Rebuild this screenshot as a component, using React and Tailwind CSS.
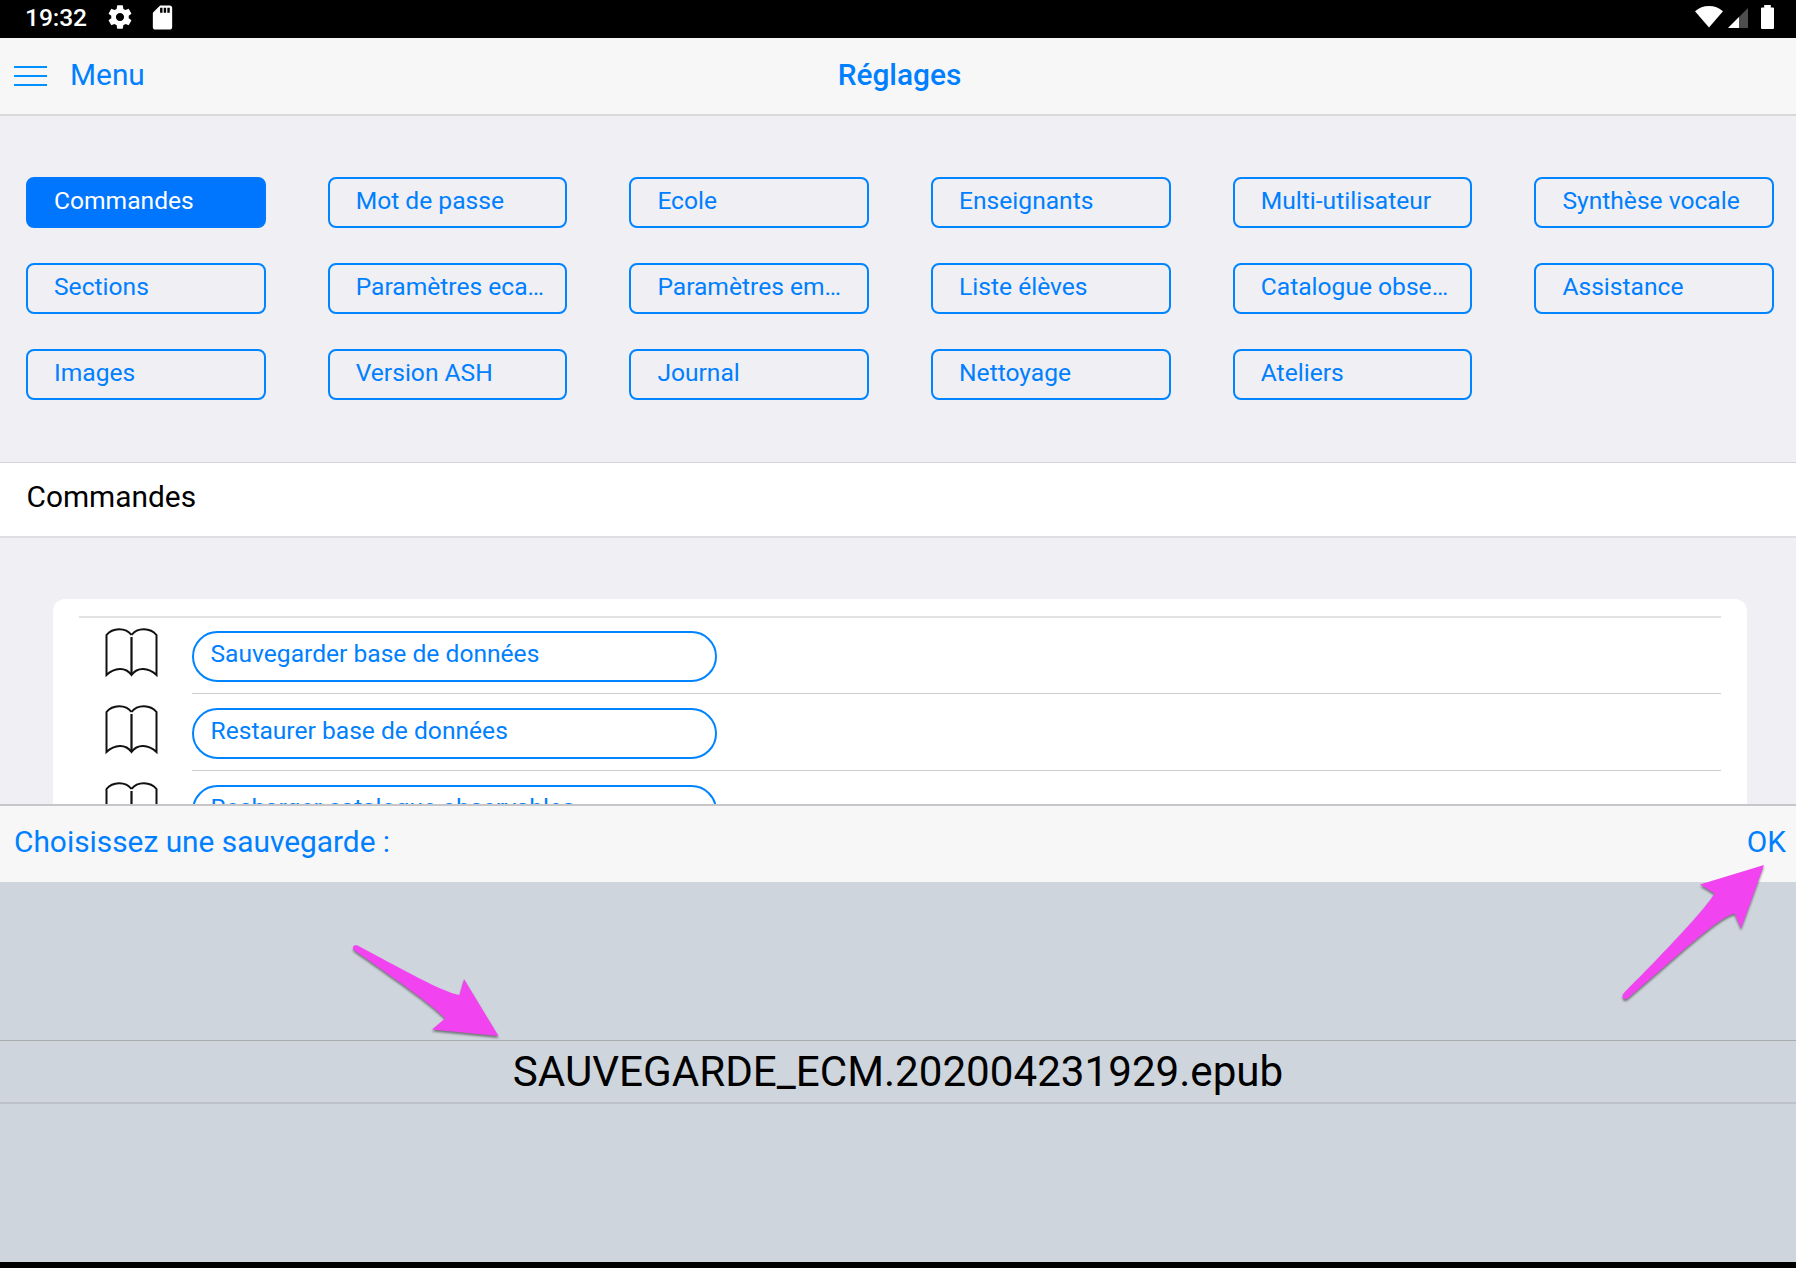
import React from "react";

const TABS = [
  "Commandes", "Mot de passe", "Ecole", "Enseignants", "Multi-utilisateur", "Synthèse vocale",
  "Sections", "Paramètres eca…", "Paramètres em…", "Liste élèves", "Catalogue obse…", "Assistance",
  "Images", "Version ASH", "Journal", "Nettoyage", "Ateliers",
];

const COMMANDS = [
  "Sauvegarder base de données",
  "Restaurer base de données",
  "Recharger catalogue observables",
];

function StatusBar() {
  return (
    <div className="flex h-[38px] shrink-0 items-start bg-black text-white">
      <span className="ml-[25px] mt-[3px] w-[64px] text-[24.6px] font-medium leading-[30px] tracking-[-0.1px]">19:32</span>
      <svg className="ml-[17px] mt-[3px] h-[28px] w-[28px]" viewBox="0 0 24 24" fill="currentColor">
        <path d="M19.43 12.98c.04-.32.07-.64.07-.98s-.03-.66-.07-.98l2.11-1.65c.19-.15.24-.42.12-.64l-2-3.46c-.12-.22-.39-.3-.61-.22l-2.49 1c-.52-.4-1.08-.73-1.69-.98l-.38-2.65C14.46 2.18 14.25 2 14 2h-4c-.25 0-.46.18-.49.42l-.38 2.65c-.61.25-1.17.59-1.69.98l-2.49-1c-.23-.09-.49 0-.61.22l-2 3.46c-.13.22-.07.49.12.64l2.11 1.65c-.04.32-.07.65-.07.98s.03.66.07.98l-2.11 1.65c-.19.15-.24.42-.12.64l2 3.46c.12.22.39.3.61.22l2.49-1c.52.4 1.08.73 1.69.98l.38 2.65c.03.24.24.42.49.42h4c.25 0 .46-.18.49-.42l.38-2.65c.61-.25 1.17-.59 1.69-.98l2.49 1c.23.09.49 0 .61-.22l2-3.46c.12-.22.07-.49-.12-.64l-2.11-1.65zM12 15.5c-1.93 0-3.5-1.57-3.5-3.5s1.57-3.5 3.5-3.5 3.5 1.57 3.5 3.5-1.57 3.5-3.5 3.5z" />
      </svg>
      <svg className="ml-[14px] mt-[3px] h-[29px] w-[29px]" viewBox="0 0 24 24" fill="currentColor">
        <path d="M18 2h-8L4.02 8 4 20c0 1.1.9 2 2 2h12c1.1 0 2-.9 2-2V4c0-1.1-.9-2-2-2zm-6 6h-2V4h2v4zm3 0h-2V4h2v4zm3 0h-2V4h2v4z" />
      </svg>
      <svg className="ml-auto mt-[6px] h-[22px] w-[28px]" viewBox="0 0 28 22" fill="currentColor">
        <path d="M14 21.5 0 5.2Q6 0 14 0t14 5.2z" />
      </svg>
      <svg className="ml-[5px] mt-[8px] h-[20px] w-[20px]" viewBox="0 0 20 20">
        <path d="M0 20 20 0v20z" fill="#4d4d4d" />
        <path d="M0 20 11 9v11z" fill="#fff" />
      </svg>
      <svg className="ml-[13px] mr-[22px] mt-[5px] h-[24px] w-[13px]" viewBox="0 0 13 24" fill="currentColor">
        <path d="M3.2 0h6.6v2.5H12a1 1 0 0 1 1 1V23a1 1 0 0 1-1 1H1a1 1 0 0 1-1-1V3.5a1 1 0 0 1 1-1h2.2z" />
      </svg>
    </div>
  );
}

function NavBar() {
  return (
    <header className="grid h-[78px] shrink-0 grid-cols-[1fr_auto_1fr] items-center border-b-2 border-[#d9d9dc] bg-[#f7f7f7] text-[29.85px] leading-[34px] text-[#007fff]">
      <div className="flex items-center pl-[14px]">
        <span className="flex w-[33px] flex-col gap-[7px]">
          <span className="h-[2px] bg-[#0090ff]" />
          <span className="h-[2px] bg-[#0090ff]" />
          <span className="h-[2px] bg-[#0090ff]" />
        </span>
        <span className="ml-[23px] pb-[2px]">Menu</span>
      </div>
      <h1 className="pb-[2px] pl-[3px] font-medium">Réglages</h1>
    </header>
  );
}

function Book() {
  return (
    <svg className="h-[50px] w-[53px] shrink-0" viewBox="0 0 53 50" fill="none" stroke="#111" strokeWidth="2">
      <path d="M26.5 7C20.500-1 7.500-.5 1.500 7v40c8-7.500 19-8.500 25 0c6-8.500 17-7.500 25 0V7C45.500-.5 32.500-1 26.500 7" />
      <path d="M26.500 9v37" strokeWidth="2.2" />
    </svg>
  );
}

function Arrow({ className, size, path }) {
  return (
    <svg
      className={className}
      viewBox={size}
      fill="#f243f0"
    >
      <path d={path} />
    </svg>
  );
}

export default function App() {
  return (
    <div className="relative flex h-[1268px] w-[1796px] flex-col overflow-hidden bg-[#efeff4] font-['Roboto',sans-serif]">
      <StatusBar />
      <NavBar />

      <nav className="grid h-[346px] shrink-0 grid-cols-[repeat(6,239.5px)] content-start justify-between gap-y-[35px] pl-[26px] pr-[22px] pt-[61px]">
        {TABS.map((t, i) => (
          <button
            key={t}
            className={
              "h-[51px] rounded-[8px] border-2 pb-[3px] pl-[26px] text-left text-[24.6px] leading-[30px] whitespace-nowrap " +
              (i === 0 ? "border-[#0078ff] bg-[#0076ff] text-white" : "border-[#0084ff] text-[#007fff]")
            }
          >
            {t}
          </button>
        ))}
      </nav>

      <h2 className="flex h-[76px] shrink-0 items-center border-b-2 border-t border-b-[#dfdfe2] border-t-[#d3d3d8] bg-white pb-[5px] pl-[26.500px] text-[29.85px] leading-[34px] text-black">
        Commandes
      </h2>

      <main className="flex h-[266px] shrink-0 flex-col overflow-hidden pl-[53px] pr-[49px] pt-[61px]">
        <section className="h-[400px] shrink-0 rounded-t-[12px] bg-white pl-[26px] pr-[26px] pt-[17px]">
          <ul className="border-t-2 border-[#e2e2e4] pl-[25.500px]">
            {COMMANDS.map((c, i) => (
              <li key={c} className={i === 0 ? "flex h-[76px]" : "flex h-[77px]"}>
                <span className={i === 0 ? "pt-[10px]" : "pt-[11px]"}>
                  <Book />
                </span>
                <div
                  className={
                    "ml-[34px] flex-1 border-b border-[#cdcdd0] " + (i === 0 ? "pt-[13px]" : "pt-[14px]")
                  }
                >
                  <button className="block h-[51px] w-[525.5px] rounded-[26px] border-2 border-[#0084ff] pb-[5px] pl-[17px] text-left text-[24.6px] leading-[30px] text-[#007fff]">
                    {c}
                  </button>
                </div>
              </li>
            ))}
          </ul>
        </section>
      </main>

      <div className="flex h-[78px] shrink-0 items-center justify-between border-t-2 border-[#c6c6ca] bg-[#f7f7f7] pb-[5px] pl-[14px] pr-[10px] text-[29.85px] leading-[34px] text-[#007fff]">
        <span>Choisissez une sauvegarde :</span>
        <span>OK</span>
      </div>

      <div className="flex flex-1 flex-col border-b-[6px] border-black bg-[#ced5dc] pt-[158px]">
        <div className="flex h-[64px] items-center justify-center border-b-2 border-t border-b-[#bdc1cb] border-t-[#a9adb0] text-[42.15px] leading-[50px] text-black">
          SAUVEGARDE_ECM.202004231929.epub
        </div>
      </div>

      <Arrow
        className="absolute left-[350px] top-[940px] h-[104px] w-[160px] drop-shadow-[0_2px_1px_rgba(0,0,0,0.45)]"
        size="350 940 160 104"
        path="M357.500 945.500C400 968 444 993 459.500 995L464 979L498.500 1036L432 1029.500L445 1018.500C436 1007 385 972 354.500 950.500C351.500 948 353 944 357.500 945.500Z"
      />
      <Arrow
        className="absolute left-[1615px] top-[860px] h-[150px] w-[155px] drop-shadow-[0_2px_1px_rgba(0,0,0,0.45)]"
        size="1615 860 155 150"
        path="M1623.500 993.500C1655 962 1706 909 1714.500 893.500L1700 884.500L1764 865L1741 928.500L1734.500 913.500C1718 917 1670 963 1627.500 998.500C1624 1001 1621 997 1623.500 993.500Z"
      />
    </div>
  );
}
